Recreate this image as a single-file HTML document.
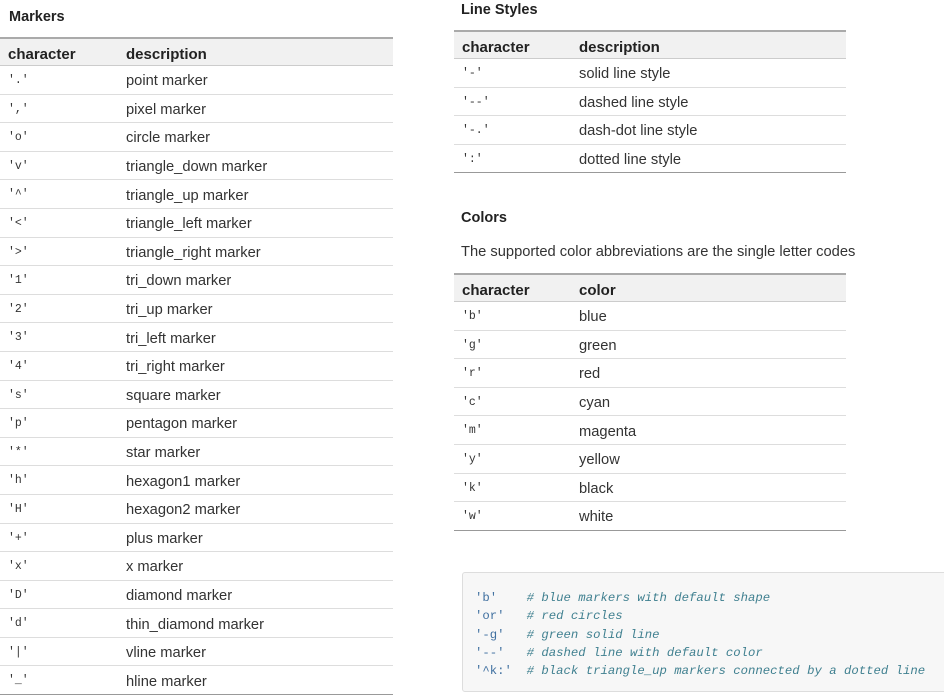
<!DOCTYPE html><html><head><style>
body{margin:0;width:944px;height:699px;background:#fff;font-family:"Liberation Sans",sans-serif;font-size:14.7px;color:#333;position:relative;overflow:hidden}
.h{position:absolute;font-weight:bold;font-size:14.5px;color:#222}
.t{position:absolute;font-size:14.7px}
.tb{position:absolute}
.r{box-sizing:border-box;height:28.6px;border-bottom:1px solid #ddd;display:flex;align-items:center;position:relative;font-size:14.7px;padding-top:3px}
.r.hd{height:29px;background:#f1f1f1;border-top:2px solid #aaa;border-bottom:1px solid #ccc;font-weight:bold;color:#222;font-size:15px;padding-top:4px}
.r.last{border-bottom:1.5px solid #999}
.c1{position:absolute;left:8px}
.c2{position:absolute;left:126px}
.m{font-family:"Liberation Mono",monospace;font-size:11.5px;color:#333;top:8px}
.code{position:absolute;left:462px;top:572px;width:490px;height:120px;box-sizing:border-box;background:#f7f7f7;border:1px solid #ddd;border-radius:3px;font-family:"Liberation Mono",monospace;font-size:12.3px;line-height:18.3px;padding:16px 0 0 12px;white-space:pre;color:#4070a0}
.code i{color:#408090}
</style></head><body>
<div class="h" style="left:9px;top:9px">Markers</div>
<div class="tb" style="left:0;top:37px;width:393px">
<div class="r hd"><span class="c1">character</span><span class="c2">description</span></div>
<div class="r"><span class="c1 m">'.'</span><span class="c2">point marker</span></div>
<div class="r"><span class="c1 m">','</span><span class="c2">pixel marker</span></div>
<div class="r"><span class="c1 m">'o'</span><span class="c2">circle marker</span></div>
<div class="r"><span class="c1 m">'v'</span><span class="c2">triangle_down marker</span></div>
<div class="r"><span class="c1 m">'^'</span><span class="c2">triangle_up marker</span></div>
<div class="r"><span class="c1 m">'&lt;'</span><span class="c2">triangle_left marker</span></div>
<div class="r"><span class="c1 m">'&gt;'</span><span class="c2">triangle_right marker</span></div>
<div class="r"><span class="c1 m">'1'</span><span class="c2">tri_down marker</span></div>
<div class="r"><span class="c1 m">'2'</span><span class="c2">tri_up marker</span></div>
<div class="r"><span class="c1 m">'3'</span><span class="c2">tri_left marker</span></div>
<div class="r"><span class="c1 m">'4'</span><span class="c2">tri_right marker</span></div>
<div class="r"><span class="c1 m">'s'</span><span class="c2">square marker</span></div>
<div class="r"><span class="c1 m">'p'</span><span class="c2">pentagon marker</span></div>
<div class="r"><span class="c1 m">'*'</span><span class="c2">star marker</span></div>
<div class="r"><span class="c1 m">'h'</span><span class="c2">hexagon1 marker</span></div>
<div class="r"><span class="c1 m">'H'</span><span class="c2">hexagon2 marker</span></div>
<div class="r"><span class="c1 m">'+'</span><span class="c2">plus marker</span></div>
<div class="r"><span class="c1 m">'x'</span><span class="c2">x marker</span></div>
<div class="r"><span class="c1 m">'D'</span><span class="c2">diamond marker</span></div>
<div class="r"><span class="c1 m">'d'</span><span class="c2">thin_diamond marker</span></div>
<div class="r"><span class="c1 m">'|'</span><span class="c2">vline marker</span></div>
<div class="r last"><span class="c1 m">'_'</span><span class="c2">hline marker</span></div>
</div>

<div class="h" style="left:461px;top:2px">Line Styles</div>
<div class="tb" style="left:454px;top:30px;width:392px">
<div class="r hd"><span class="c1">character</span><span class="c2" style="left:125px">description</span></div>
<div class="r"><span class="c1 m">'-'</span><span class="c2" style="left:125px">solid line style</span></div>
<div class="r"><span class="c1 m">'--'</span><span class="c2" style="left:125px">dashed line style</span></div>
<div class="r"><span class="c1 m">'-.'</span><span class="c2" style="left:125px">dash-dot line style</span></div>
<div class="r last"><span class="c1 m">':'</span><span class="c2" style="left:125px">dotted line style</span></div>
</div>

<div class="h" style="left:461px;top:210px">Colors</div>
<div class="t" style="left:461px;top:244px">The supported color abbreviations are the single letter codes</div>
<div class="tb" style="left:454px;top:273px;width:392px">
<div class="r hd"><span class="c1">character</span><span class="c2" style="left:125px">color</span></div>
<div class="r"><span class="c1 m">'b'</span><span class="c2" style="left:125px">blue</span></div>
<div class="r"><span class="c1 m">'g'</span><span class="c2" style="left:125px">green</span></div>
<div class="r"><span class="c1 m">'r'</span><span class="c2" style="left:125px">red</span></div>
<div class="r"><span class="c1 m">'c'</span><span class="c2" style="left:125px">cyan</span></div>
<div class="r"><span class="c1 m">'m'</span><span class="c2" style="left:125px">magenta</span></div>
<div class="r"><span class="c1 m">'y'</span><span class="c2" style="left:125px">yellow</span></div>
<div class="r"><span class="c1 m">'k'</span><span class="c2" style="left:125px">black</span></div>
<div class="r last"><span class="c1 m">'w'</span><span class="c2" style="left:125px">white</span></div>
</div>

<div class="code">'b'    <i># blue markers with default shape</i>
'or'   <i># red circles</i>
'-g'   <i># green solid line</i>
'--'   <i># dashed line with default color</i>
'^k:'  <i># black triangle_up markers connected by a dotted line</i></div>
</body></html>
